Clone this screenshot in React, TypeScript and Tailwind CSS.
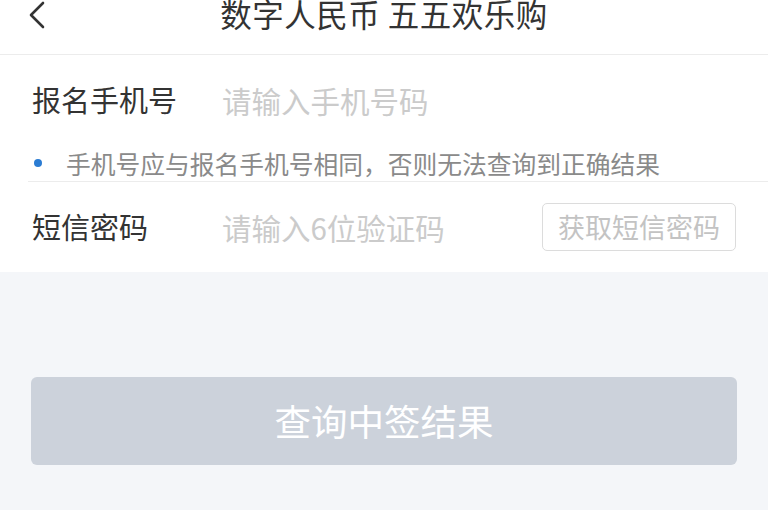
import React from "react";

export default function App() {
  const font = { fontFamily: '"Noto Sans CJK SC", "Noto Sans", sans-serif' };
  return (
    <div className="w-[768px] h-[510px] bg-[#f4f6f9] overflow-hidden" style={font}>
      <div className="bg-white h-[55px] border-b border-[#ececec] relative flex items-start justify-center">
        <svg className="absolute left-[26px] top-[1px]" width="22" height="28" viewBox="0 0 22 28" fill="none">
          <path d="M17 2 L5 14 L17 26" stroke="#333" strokeWidth="2.6" strokeLinecap="round" strokeLinejoin="round" />
        </svg>
        <div className="text-[31.5px] leading-[32px] text-[#333] mt-[-3px] tracking-[0.5px]">数字人民币 五五欢乐购</div>
      </div>
      <div className="bg-white">
        <div className="h-[90px] flex items-center">
          <div className="w-[222px] pl-[32px] text-[29px] text-[#333]">报名手机号</div>
          <div className="text-[29.5px] text-[#cbcbcb]">请输入手机号码</div>
        </div>
        <div className="ml-[28px] h-[37px] border-b border-[#ececec] flex items-center">
          <div className="w-[8px] h-[8px] rounded-full bg-[#2b7cd3] ml-[6px] mr-[24px]"></div>
          <div className="text-[24.75px] text-[#8a8a8a] leading-none">手机号应与报名手机号相同，否则无法查询到正确结果</div>
        </div>
        <div className="h-[90px] flex items-center">
          <div className="w-[222px] pl-[32px] text-[29px] text-[#333]">短信密码</div>
          <div className="flex-1 text-[29.5px] text-[#cbcbcb]">请输入6位验证码</div>
          <div className="mr-[32px] w-[194px] h-[48px] border-[1.5px] border-[#dcdcdc] rounded-[5px] flex items-center justify-center text-[27px] text-[#c3c3c3]">获取短信密码</div>
        </div>
      </div>
      <div className="px-[31px] pt-[105px]">
        <div className="h-[88px] rounded-[6px] bg-[#ccd2db] flex items-center justify-center text-[36.5px] text-white">查询中签结果</div>
      </div>
    </div>
  );
}
